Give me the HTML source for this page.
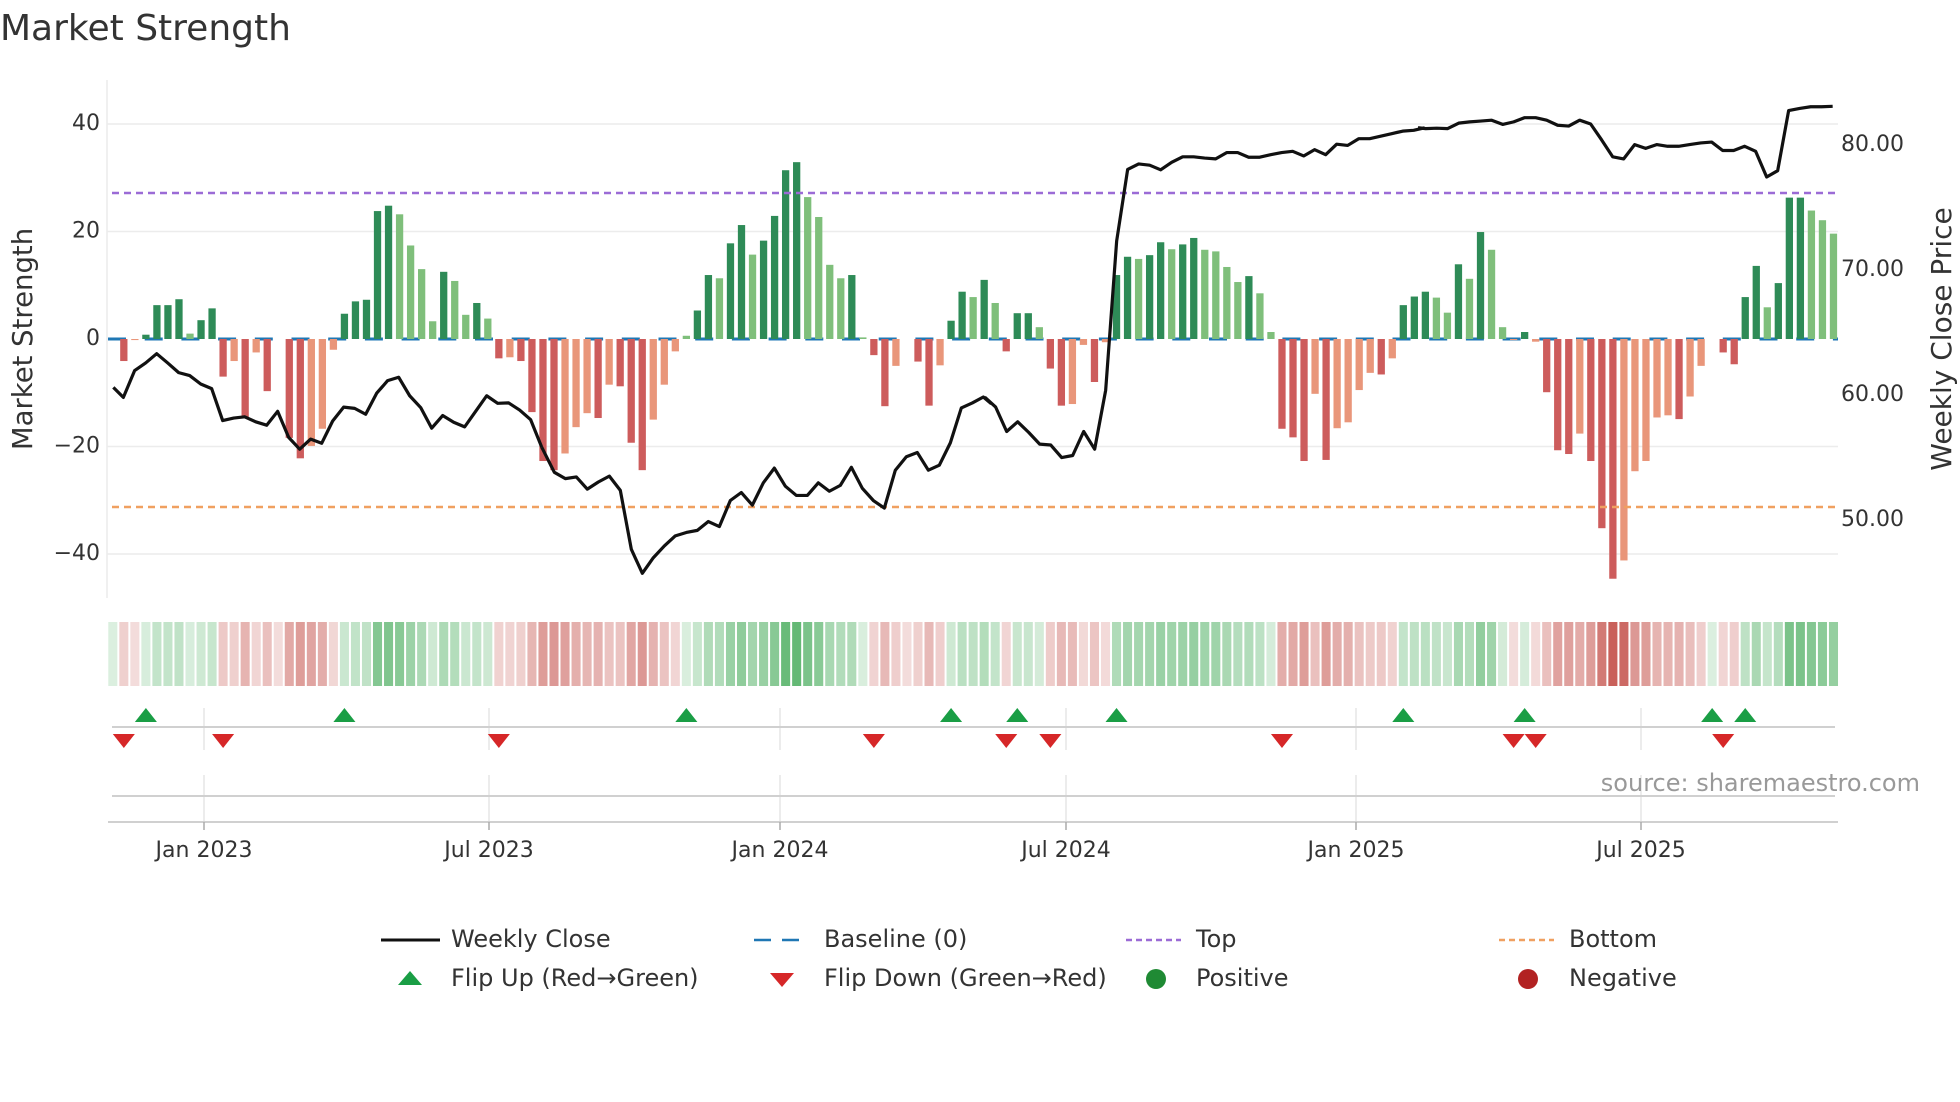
<!DOCTYPE html>
<html><head><meta charset="utf-8"><style>
html,body{margin:0;padding:0;background:#fff;}
svg{display:block;font-family:"DejaVu Sans","Liberation Sans",sans-serif;}
.dg{fill:#2e8b57}.lg{fill:#7fbf7b}.dr{fill:#cd5c5c}.lr{fill:#e9967a}
.hg{fill:#4aad5e}.hr{fill:#c4504a}
</style></head><body>
<svg width="1960" height="1102" viewBox="0 0 1960 1102" xmlns="http://www.w3.org/2000/svg">
<rect width="1960" height="1102" fill="#fff"/>
<text x="0" y="40" font-size="36" fill="#333">Market Strength</text>

<g stroke="#ececec" stroke-width="1.5">
<line x1="107" y1="124" x2="1838" y2="124"/><line x1="107" y1="231.5" x2="1838" y2="231.5"/>
<line x1="107" y1="446.5" x2="1838" y2="446.5"/><line x1="107" y1="554" x2="1838" y2="554"/>
<line x1="107" y1="80" x2="107" y2="598"/>
</g>
<line x1="108" y1="339" x2="1838" y2="339" stroke="#1f77b4" stroke-width="3" stroke-dasharray="18 18.7"/>

<g font-size="22" fill="#333" text-anchor="end" dominant-baseline="middle">
<text x="100" y="124">40</text><text x="100" y="231.5">20</text><text x="100" y="339">0</text>
<text x="100" y="446.5">−20</text><text x="100" y="554">−40</text>
</g>
<g font-size="22" fill="#333" dominant-baseline="middle">
<text x="1841" y="145">80.00</text><text x="1841" y="270">70.00</text><text x="1841" y="395">60.00</text><text x="1841" y="520">50.00</text>
</g>
<text transform="translate(24,339) rotate(-90)" font-size="27.5" fill="#333" text-anchor="middle" dominant-baseline="middle">Market Strength</text>
<text transform="translate(1943,339) rotate(-90)" font-size="28" fill="#333" text-anchor="middle" dominant-baseline="middle">Weekly Close Price</text>

<g transform="translate(112.8,339) scale(11.03,-5.375)">
<rect class="dr" x="0.67" y="-4.1" width="0.66" height="4.1"/>
<rect class="lr" x="1.67" y="-0.2" width="0.66" height="0.2"/>
<rect class="dg" x="2.67" y="0" width="0.66" height="0.8"/>
<rect class="dg" x="3.67" y="0" width="0.66" height="6.3"/>
<rect class="dg" x="4.67" y="0" width="0.66" height="6.3"/>
<rect class="dg" x="5.67" y="0" width="0.66" height="7.4"/>
<rect class="lg" x="6.67" y="0" width="0.66" height="1.0"/>
<rect class="dg" x="7.67" y="0" width="0.66" height="3.5"/>
<rect class="dg" x="8.67" y="0" width="0.66" height="5.7"/>
<rect class="dr" x="9.67" y="-7.0" width="0.66" height="7.0"/>
<rect class="lr" x="10.67" y="-4.1" width="0.66" height="4.1"/>
<rect class="dr" x="11.67" y="-14.6" width="0.66" height="14.6"/>
<rect class="lr" x="12.67" y="-2.5" width="0.66" height="2.5"/>
<rect class="dr" x="13.67" y="-9.7" width="0.66" height="9.7"/>
<rect class="dr" x="15.67" y="-18.4" width="0.66" height="18.4"/>
<rect class="dr" x="16.67" y="-22.2" width="0.66" height="22.2"/>
<rect class="lr" x="17.67" y="-19.9" width="0.66" height="19.9"/>
<rect class="lr" x="18.67" y="-16.7" width="0.66" height="16.7"/>
<rect class="lr" x="19.67" y="-2.0" width="0.66" height="2.0"/>
<rect class="dg" x="20.67" y="0" width="0.66" height="4.7"/>
<rect class="dg" x="21.67" y="0" width="0.66" height="7.0"/>
<rect class="dg" x="22.67" y="0" width="0.66" height="7.3"/>
<rect class="dg" x="23.67" y="0" width="0.66" height="23.8"/>
<rect class="dg" x="24.67" y="0" width="0.66" height="24.8"/>
<rect class="lg" x="25.67" y="0" width="0.66" height="23.2"/>
<rect class="lg" x="26.67" y="0" width="0.66" height="17.4"/>
<rect class="lg" x="27.67" y="0" width="0.66" height="13.0"/>
<rect class="lg" x="28.67" y="0" width="0.66" height="3.3"/>
<rect class="dg" x="29.67" y="0" width="0.66" height="12.5"/>
<rect class="lg" x="30.67" y="0" width="0.66" height="10.8"/>
<rect class="lg" x="31.67" y="0" width="0.66" height="4.5"/>
<rect class="dg" x="32.67" y="0" width="0.66" height="6.7"/>
<rect class="lg" x="33.67" y="0" width="0.66" height="3.8"/>
<rect class="dr" x="34.67" y="-3.6" width="0.66" height="3.6"/>
<rect class="lr" x="35.67" y="-3.4" width="0.66" height="3.4"/>
<rect class="dr" x="36.67" y="-4.1" width="0.66" height="4.1"/>
<rect class="dr" x="37.67" y="-13.6" width="0.66" height="13.6"/>
<rect class="dr" x="38.67" y="-22.7" width="0.66" height="22.7"/>
<rect class="dr" x="39.67" y="-24.4" width="0.66" height="24.4"/>
<rect class="lr" x="40.67" y="-21.3" width="0.66" height="21.3"/>
<rect class="lr" x="41.67" y="-16.4" width="0.66" height="16.4"/>
<rect class="lr" x="42.67" y="-13.8" width="0.66" height="13.8"/>
<rect class="dr" x="43.67" y="-14.7" width="0.66" height="14.7"/>
<rect class="lr" x="44.67" y="-8.5" width="0.66" height="8.5"/>
<rect class="dr" x="45.67" y="-8.8" width="0.66" height="8.8"/>
<rect class="dr" x="46.67" y="-19.3" width="0.66" height="19.3"/>
<rect class="dr" x="47.67" y="-24.4" width="0.66" height="24.4"/>
<rect class="lr" x="48.67" y="-15.0" width="0.66" height="15.0"/>
<rect class="lr" x="49.67" y="-8.5" width="0.66" height="8.5"/>
<rect class="lr" x="50.67" y="-2.3" width="0.66" height="2.3"/>
<rect class="lg" x="51.67" y="0" width="0.66" height="0.6"/>
<rect class="dg" x="52.67" y="0" width="0.66" height="5.3"/>
<rect class="dg" x="53.67" y="0" width="0.66" height="11.9"/>
<rect class="lg" x="54.67" y="0" width="0.66" height="11.3"/>
<rect class="dg" x="55.67" y="0" width="0.66" height="17.8"/>
<rect class="dg" x="56.67" y="0" width="0.66" height="21.2"/>
<rect class="lg" x="57.67" y="0" width="0.66" height="15.7"/>
<rect class="dg" x="58.67" y="0" width="0.66" height="18.3"/>
<rect class="dg" x="59.67" y="0" width="0.66" height="22.9"/>
<rect class="dg" x="60.67" y="0" width="0.66" height="31.4"/>
<rect class="dg" x="61.67" y="0" width="0.66" height="32.9"/>
<rect class="lg" x="62.67" y="0" width="0.66" height="26.4"/>
<rect class="lg" x="63.67" y="0" width="0.66" height="22.7"/>
<rect class="lg" x="64.67" y="0" width="0.66" height="13.8"/>
<rect class="lg" x="65.67" y="0" width="0.66" height="11.3"/>
<rect class="dg" x="66.67" y="0" width="0.66" height="11.9"/>
<rect class="lg" x="67.67" y="0" width="0.66" height="0.3"/>
<rect class="dr" x="68.67" y="-3.0" width="0.66" height="3.0"/>
<rect class="dr" x="69.67" y="-12.5" width="0.66" height="12.5"/>
<rect class="lr" x="70.67" y="-5.0" width="0.66" height="5.0"/>
<rect class="dr" x="72.67" y="-4.2" width="0.66" height="4.2"/>
<rect class="dr" x="73.67" y="-12.4" width="0.66" height="12.4"/>
<rect class="lr" x="74.67" y="-4.9" width="0.66" height="4.9"/>
<rect class="dg" x="75.67" y="0" width="0.66" height="3.4"/>
<rect class="dg" x="76.67" y="0" width="0.66" height="8.8"/>
<rect class="lg" x="77.67" y="0" width="0.66" height="7.8"/>
<rect class="dg" x="78.67" y="0" width="0.66" height="11.0"/>
<rect class="lg" x="79.67" y="0" width="0.66" height="6.7"/>
<rect class="dr" x="80.67" y="-2.3" width="0.66" height="2.3"/>
<rect class="dg" x="81.67" y="0" width="0.66" height="4.8"/>
<rect class="dg" x="82.67" y="0" width="0.66" height="4.8"/>
<rect class="lg" x="83.67" y="0" width="0.66" height="2.2"/>
<rect class="dr" x="84.67" y="-5.5" width="0.66" height="5.5"/>
<rect class="dr" x="85.67" y="-12.4" width="0.66" height="12.4"/>
<rect class="lr" x="86.67" y="-12.1" width="0.66" height="12.1"/>
<rect class="lr" x="87.67" y="-1.1" width="0.66" height="1.1"/>
<rect class="dr" x="88.67" y="-8.0" width="0.66" height="8.0"/>
<rect class="lr" x="89.67" y="-0.6" width="0.66" height="0.6"/>
<rect class="dg" x="90.67" y="0" width="0.66" height="11.9"/>
<rect class="dg" x="91.67" y="0" width="0.66" height="15.3"/>
<rect class="lg" x="92.67" y="0" width="0.66" height="14.9"/>
<rect class="dg" x="93.67" y="0" width="0.66" height="15.6"/>
<rect class="dg" x="94.67" y="0" width="0.66" height="18.0"/>
<rect class="lg" x="95.67" y="0" width="0.66" height="16.7"/>
<rect class="dg" x="96.67" y="0" width="0.66" height="17.6"/>
<rect class="dg" x="97.67" y="0" width="0.66" height="18.8"/>
<rect class="lg" x="98.67" y="0" width="0.66" height="16.6"/>
<rect class="lg" x="99.67" y="0" width="0.66" height="16.3"/>
<rect class="lg" x="100.67" y="0" width="0.66" height="13.4"/>
<rect class="lg" x="101.67" y="0" width="0.66" height="10.6"/>
<rect class="dg" x="102.67" y="0" width="0.66" height="11.7"/>
<rect class="lg" x="103.67" y="0" width="0.66" height="8.5"/>
<rect class="lg" x="104.67" y="0" width="0.66" height="1.3"/>
<rect class="dr" x="105.67" y="-16.7" width="0.66" height="16.7"/>
<rect class="dr" x="106.67" y="-18.3" width="0.66" height="18.3"/>
<rect class="dr" x="107.67" y="-22.7" width="0.66" height="22.7"/>
<rect class="lr" x="108.67" y="-10.2" width="0.66" height="10.2"/>
<rect class="dr" x="109.67" y="-22.5" width="0.66" height="22.5"/>
<rect class="lr" x="110.67" y="-16.6" width="0.66" height="16.6"/>
<rect class="lr" x="111.67" y="-15.5" width="0.66" height="15.5"/>
<rect class="lr" x="112.67" y="-9.5" width="0.66" height="9.5"/>
<rect class="lr" x="113.67" y="-6.3" width="0.66" height="6.3"/>
<rect class="dr" x="114.67" y="-6.6" width="0.66" height="6.6"/>
<rect class="lr" x="115.67" y="-3.6" width="0.66" height="3.6"/>
<rect class="dg" x="116.67" y="0" width="0.66" height="6.3"/>
<rect class="dg" x="117.67" y="0" width="0.66" height="7.9"/>
<rect class="dg" x="118.67" y="0" width="0.66" height="8.8"/>
<rect class="lg" x="119.67" y="0" width="0.66" height="7.7"/>
<rect class="lg" x="120.67" y="0" width="0.66" height="4.9"/>
<rect class="dg" x="121.67" y="0" width="0.66" height="13.9"/>
<rect class="lg" x="122.67" y="0" width="0.66" height="11.2"/>
<rect class="dg" x="123.67" y="0" width="0.66" height="19.9"/>
<rect class="lg" x="124.67" y="0" width="0.66" height="16.6"/>
<rect class="lg" x="125.67" y="0" width="0.66" height="2.2"/>
<rect class="lr" x="126.67" y="-0.2" width="0.66" height="0.2"/>
<rect class="dg" x="127.67" y="0" width="0.66" height="1.3"/>
<rect class="lr" x="128.67" y="-0.5" width="0.66" height="0.5"/>
<rect class="dr" x="129.67" y="-9.9" width="0.66" height="9.9"/>
<rect class="dr" x="130.67" y="-20.7" width="0.66" height="20.7"/>
<rect class="dr" x="131.67" y="-21.4" width="0.66" height="21.4"/>
<rect class="lr" x="132.67" y="-17.6" width="0.66" height="17.6"/>
<rect class="dr" x="133.67" y="-22.7" width="0.66" height="22.7"/>
<rect class="dr" x="134.67" y="-35.2" width="0.66" height="35.2"/>
<rect class="dr" x="135.67" y="-44.6" width="0.66" height="44.6"/>
<rect class="lr" x="136.67" y="-41.2" width="0.66" height="41.2"/>
<rect class="lr" x="137.67" y="-24.6" width="0.66" height="24.6"/>
<rect class="lr" x="138.67" y="-22.7" width="0.66" height="22.7"/>
<rect class="lr" x="139.67" y="-14.6" width="0.66" height="14.6"/>
<rect class="lr" x="140.67" y="-14.2" width="0.66" height="14.2"/>
<rect class="dr" x="141.67" y="-14.9" width="0.66" height="14.9"/>
<rect class="lr" x="142.67" y="-10.7" width="0.66" height="10.7"/>
<rect class="lr" x="143.67" y="-5.0" width="0.66" height="5.0"/>
<rect class="dr" x="145.67" y="-2.5" width="0.66" height="2.5"/>
<rect class="dr" x="146.67" y="-4.7" width="0.66" height="4.7"/>
<rect class="dg" x="147.67" y="0" width="0.66" height="7.8"/>
<rect class="dg" x="148.67" y="0" width="0.66" height="13.6"/>
<rect class="lg" x="149.67" y="0" width="0.66" height="5.9"/>
<rect class="dg" x="150.67" y="0" width="0.66" height="10.4"/>
<rect class="dg" x="151.67" y="0" width="0.66" height="26.3"/>
<rect class="dg" x="152.67" y="0" width="0.66" height="26.3"/>
<rect class="lg" x="153.67" y="0" width="0.66" height="23.9"/>
<rect class="lg" x="154.67" y="0" width="0.66" height="22.1"/>
<rect class="lg" x="155.67" y="0" width="0.66" height="19.6"/>
</g>

<line x1="112" y1="193" x2="1838" y2="193" stroke="#9b6bd6" stroke-width="2.5" stroke-dasharray="7 5"/>
<line x1="112" y1="507" x2="1838" y2="507" stroke="#f0a060" stroke-width="2.5" stroke-dasharray="7 5"/>

<g fill="none" stroke="#111" stroke-width="3.2" stroke-linejoin="round">
<polyline vector-effect="non-scaling-stroke" transform="translate(100,100) scale(0.33333,0.4207)" points="40,683 70,707 104,643 137,625 170,603 203,625 236,648 269,655 302,675 335,686 368,762 401,756 434,753 467,765 500,773 533,740 566,802 599,830 632,806 665,816 698,763 731,730 764,733 797,747 830,697 863,667 896,659 929,703 962,731 995,780 1028,750 1061,766 1094,777 1127,740 1160,703 1193,721 1226,720 1259,737 1292,760 1325,825"/>
<polyline vector-effect="non-scaling-stroke" transform="translate(540,100) scale(0.33333,0.4207)" points="5,825 43,885 76,900 109,896 142,925 175,908 208,894 241,928 274,1068 307,1125 340,1088 373,1060 406,1036 439,1028 472,1023 505,1002 538,1014 571,952 604,933 637,963 670,910 703,875 736,918 769,940 802,940 835,910 868,930 901,916 934,873 967,923 1000,952 1033,970 1066,880 1099,848 1132,838 1165,880 1198,868 1231,815 1264,732 1297,720 1330,706 1354,722"/>
<polyline vector-effect="non-scaling-stroke" transform="translate(980,100) scale(0.33333,0.4207)" points="14,706 47,730 80,788 113,765 146,790 179,818 212,820 245,850 278,845 311,788 344,830 377,690 410,335 443,165 476,152 509,155 542,166 575,148 608,135 641,135 674,138 707,140 740,125 773,125 806,136 839,136 872,130 905,125 938,122 971,133 1004,118 1037,130 1070,105 1103,108 1136,92 1169,92 1202,86 1235,80 1268,74 1301,72 1334,66"/>
<polyline vector-effect="non-scaling-stroke" transform="translate(1420,100) scale(0.33333,0.4207)" points="-6,66 17,68 50,67 83,68 116,55 149,52 182,50 215,48 248,58 281,52 314,42 347,42 380,48 413,60 446,62 479,48 512,57 545,95 578,135 611,140 644,106 677,115 710,106 743,110 776,110 809,106 842,102 875,100 908,120 941,120 974,110 1007,122 1040,183 1073,168 1106,25 1139,20 1172,16 1205,16 1238,15"/>
</g>

<g transform="translate(112.8,622) scale(11.03,1)">
<rect class="hg" x="-0.41" width="0.82" height="64" opacity=".20"/>
<rect class="hr" x="0.59" width="0.82" height="64" opacity=".27"/>
<rect class="hr" x="1.59" width="0.82" height="64" opacity=".20"/>
<rect class="hg" x="2.59" width="0.82" height="64" opacity=".22"/>
<rect class="hg" x="3.59" width="0.82" height="64" opacity=".33"/>
<rect class="hg" x="4.59" width="0.82" height="64" opacity=".33"/>
<rect class="hg" x="5.59" width="0.82" height="64" opacity=".35"/>
<rect class="hg" x="6.59" width="0.82" height="64" opacity=".22"/>
<rect class="hg" x="7.59" width="0.82" height="64" opacity=".27"/>
<rect class="hg" x="8.59" width="0.82" height="64" opacity=".31"/>
<rect class="hr" x="9.59" width="0.82" height="64" opacity=".31"/>
<rect class="hr" x="10.59" width="0.82" height="64" opacity=".27"/>
<rect class="hr" x="11.59" width="0.82" height="64" opacity=".43"/>
<rect class="hr" x="12.59" width="0.82" height="64" opacity=".24"/>
<rect class="hr" x="13.59" width="0.82" height="64" opacity=".36"/>
<rect class="hr" x="14.59" width="0.82" height="64" opacity=".20"/>
<rect class="hr" x="15.59" width="0.82" height="64" opacity=".49"/>
<rect class="hr" x="16.59" width="0.82" height="64" opacity=".56"/>
<rect class="hr" x="17.59" width="0.82" height="64" opacity=".52"/>
<rect class="hr" x="18.59" width="0.82" height="64" opacity=".47"/>
<rect class="hr" x="19.59" width="0.82" height="64" opacity=".23"/>
<rect class="hg" x="20.59" width="0.82" height="64" opacity=".29"/>
<rect class="hg" x="21.59" width="0.82" height="64" opacity=".34"/>
<rect class="hg" x="22.59" width="0.82" height="64" opacity=".35"/>
<rect class="hg" x="23.59" width="0.82" height="64" opacity=".68"/>
<rect class="hg" x="24.59" width="0.82" height="64" opacity=".70"/>
<rect class="hg" x="25.59" width="0.82" height="64" opacity=".66"/>
<rect class="hg" x="26.59" width="0.82" height="64" opacity=".55"/>
<rect class="hg" x="27.59" width="0.82" height="64" opacity=".46"/>
<rect class="hg" x="28.59" width="0.82" height="64" opacity=".27"/>
<rect class="hg" x="29.59" width="0.82" height="64" opacity=".45"/>
<rect class="hg" x="30.59" width="0.82" height="64" opacity=".42"/>
<rect class="hg" x="31.59" width="0.82" height="64" opacity=".29"/>
<rect class="hg" x="32.59" width="0.82" height="64" opacity=".33"/>
<rect class="hg" x="33.59" width="0.82" height="64" opacity=".28"/>
<rect class="hr" x="34.59" width="0.82" height="64" opacity=".26"/>
<rect class="hr" x="35.59" width="0.82" height="64" opacity=".25"/>
<rect class="hr" x="36.59" width="0.82" height="64" opacity=".27"/>
<rect class="hr" x="37.59" width="0.82" height="64" opacity=".42"/>
<rect class="hr" x="38.59" width="0.82" height="64" opacity=".56"/>
<rect class="hr" x="39.59" width="0.82" height="64" opacity=".59"/>
<rect class="hr" x="40.59" width="0.82" height="64" opacity=".54"/>
<rect class="hr" x="41.59" width="0.82" height="64" opacity=".46"/>
<rect class="hr" x="42.59" width="0.82" height="64" opacity=".42"/>
<rect class="hr" x="43.59" width="0.82" height="64" opacity=".44"/>
<rect class="hr" x="44.59" width="0.82" height="64" opacity=".34"/>
<rect class="hr" x="45.59" width="0.82" height="64" opacity=".34"/>
<rect class="hr" x="46.59" width="0.82" height="64" opacity=".51"/>
<rect class="hr" x="47.59" width="0.82" height="64" opacity=".59"/>
<rect class="hr" x="48.59" width="0.82" height="64" opacity=".44"/>
<rect class="hr" x="49.59" width="0.82" height="64" opacity=".34"/>
<rect class="hr" x="50.59" width="0.82" height="64" opacity=".24"/>
<rect class="hg" x="51.59" width="0.82" height="64" opacity=".21"/>
<rect class="hg" x="52.59" width="0.82" height="64" opacity=".31"/>
<rect class="hg" x="53.59" width="0.82" height="64" opacity=".44"/>
<rect class="hg" x="54.59" width="0.82" height="64" opacity=".43"/>
<rect class="hg" x="55.59" width="0.82" height="64" opacity=".56"/>
<rect class="hg" x="56.59" width="0.82" height="64" opacity=".62"/>
<rect class="hg" x="57.59" width="0.82" height="64" opacity=".51"/>
<rect class="hg" x="58.59" width="0.82" height="64" opacity=".57"/>
<rect class="hg" x="59.59" width="0.82" height="64" opacity=".66"/>
<rect class="hg" x="60.59" width="0.82" height="64" opacity=".83"/>
<rect class="hg" x="61.59" width="0.82" height="64" opacity=".86"/>
<rect class="hg" x="62.59" width="0.82" height="64" opacity=".73"/>
<rect class="hg" x="63.59" width="0.82" height="64" opacity=".65"/>
<rect class="hg" x="64.59" width="0.82" height="64" opacity=".48"/>
<rect class="hg" x="65.59" width="0.82" height="64" opacity=".43"/>
<rect class="hg" x="66.59" width="0.82" height="64" opacity=".44"/>
<rect class="hg" x="67.59" width="0.82" height="64" opacity=".21"/>
<rect class="hr" x="68.59" width="0.82" height="64" opacity=".25"/>
<rect class="hr" x="69.59" width="0.82" height="64" opacity=".40"/>
<rect class="hr" x="70.59" width="0.82" height="64" opacity=".28"/>
<rect class="hr" x="71.59" width="0.82" height="64" opacity=".20"/>
<rect class="hr" x="72.59" width="0.82" height="64" opacity=".27"/>
<rect class="hr" x="73.59" width="0.82" height="64" opacity=".40"/>
<rect class="hr" x="74.59" width="0.82" height="64" opacity=".28"/>
<rect class="hg" x="75.59" width="0.82" height="64" opacity=".27"/>
<rect class="hg" x="76.59" width="0.82" height="64" opacity=".38"/>
<rect class="hg" x="77.59" width="0.82" height="64" opacity=".36"/>
<rect class="hg" x="78.59" width="0.82" height="64" opacity=".42"/>
<rect class="hg" x="79.59" width="0.82" height="64" opacity=".33"/>
<rect class="hr" x="80.59" width="0.82" height="64" opacity=".24"/>
<rect class="hg" x="81.59" width="0.82" height="64" opacity=".30"/>
<rect class="hg" x="82.59" width="0.82" height="64" opacity=".30"/>
<rect class="hg" x="83.59" width="0.82" height="64" opacity=".24"/>
<rect class="hr" x="84.59" width="0.82" height="64" opacity=".29"/>
<rect class="hr" x="85.59" width="0.82" height="64" opacity=".40"/>
<rect class="hr" x="86.59" width="0.82" height="64" opacity=".39"/>
<rect class="hr" x="87.59" width="0.82" height="64" opacity=".22"/>
<rect class="hr" x="88.59" width="0.82" height="64" opacity=".33"/>
<rect class="hr" x="89.59" width="0.82" height="64" opacity=".21"/>
<rect class="hg" x="90.59" width="0.82" height="64" opacity=".44"/>
<rect class="hg" x="91.59" width="0.82" height="64" opacity=".51"/>
<rect class="hg" x="92.59" width="0.82" height="64" opacity=".50"/>
<rect class="hg" x="93.59" width="0.82" height="64" opacity=".51"/>
<rect class="hg" x="94.59" width="0.82" height="64" opacity=".56"/>
<rect class="hg" x="95.59" width="0.82" height="64" opacity=".53"/>
<rect class="hg" x="96.59" width="0.82" height="64" opacity=".55"/>
<rect class="hg" x="97.59" width="0.82" height="64" opacity=".58"/>
<rect class="hg" x="98.59" width="0.82" height="64" opacity=".53"/>
<rect class="hg" x="99.59" width="0.82" height="64" opacity=".53"/>
<rect class="hg" x="100.59" width="0.82" height="64" opacity=".47"/>
<rect class="hg" x="101.59" width="0.82" height="64" opacity=".41"/>
<rect class="hg" x="102.59" width="0.82" height="64" opacity=".43"/>
<rect class="hg" x="103.59" width="0.82" height="64" opacity=".37"/>
<rect class="hg" x="104.59" width="0.82" height="64" opacity=".23"/>
<rect class="hr" x="105.59" width="0.82" height="64" opacity=".47"/>
<rect class="hr" x="106.59" width="0.82" height="64" opacity=".49"/>
<rect class="hr" x="107.59" width="0.82" height="64" opacity=".56"/>
<rect class="hr" x="108.59" width="0.82" height="64" opacity=".36"/>
<rect class="hr" x="109.59" width="0.82" height="64" opacity=".56"/>
<rect class="hr" x="110.59" width="0.82" height="64" opacity=".47"/>
<rect class="hr" x="111.59" width="0.82" height="64" opacity=".45"/>
<rect class="hr" x="112.59" width="0.82" height="64" opacity=".35"/>
<rect class="hr" x="113.59" width="0.82" height="64" opacity=".30"/>
<rect class="hr" x="114.59" width="0.82" height="64" opacity=".31"/>
<rect class="hr" x="115.59" width="0.82" height="64" opacity=".26"/>
<rect class="hg" x="116.59" width="0.82" height="64" opacity=".33"/>
<rect class="hg" x="117.59" width="0.82" height="64" opacity=".36"/>
<rect class="hg" x="118.59" width="0.82" height="64" opacity=".38"/>
<rect class="hg" x="119.59" width="0.82" height="64" opacity=".35"/>
<rect class="hg" x="120.59" width="0.82" height="64" opacity=".30"/>
<rect class="hg" x="121.59" width="0.82" height="64" opacity=".48"/>
<rect class="hg" x="122.59" width="0.82" height="64" opacity=".42"/>
<rect class="hg" x="123.59" width="0.82" height="64" opacity=".60"/>
<rect class="hg" x="124.59" width="0.82" height="64" opacity=".53"/>
<rect class="hg" x="125.59" width="0.82" height="64" opacity=".24"/>
<rect class="hr" x="126.59" width="0.82" height="64" opacity=".20"/>
<rect class="hg" x="127.59" width="0.82" height="64" opacity=".23"/>
<rect class="hr" x="128.59" width="0.82" height="64" opacity=".21"/>
<rect class="hr" x="129.59" width="0.82" height="64" opacity=".36"/>
<rect class="hr" x="130.59" width="0.82" height="64" opacity=".53"/>
<rect class="hr" x="131.59" width="0.82" height="64" opacity=".54"/>
<rect class="hr" x="132.59" width="0.82" height="64" opacity=".48"/>
<rect class="hr" x="133.59" width="0.82" height="64" opacity=".56"/>
<rect class="hr" x="134.59" width="0.82" height="64" opacity=".76"/>
<rect class="hr" x="135.59" width="0.82" height="64" opacity=".91"/>
<rect class="hr" x="136.59" width="0.82" height="64" opacity=".86"/>
<rect class="hr" x="137.59" width="0.82" height="64" opacity=".59"/>
<rect class="hr" x="138.59" width="0.82" height="64" opacity=".56"/>
<rect class="hr" x="139.59" width="0.82" height="64" opacity=".43"/>
<rect class="hr" x="140.59" width="0.82" height="64" opacity=".43"/>
<rect class="hr" x="141.59" width="0.82" height="64" opacity=".44"/>
<rect class="hr" x="142.59" width="0.82" height="64" opacity=".37"/>
<rect class="hr" x="143.59" width="0.82" height="64" opacity=".28"/>
<rect class="hg" x="144.59" width="0.82" height="64" opacity=".20"/>
<rect class="hr" x="145.59" width="0.82" height="64" opacity=".24"/>
<rect class="hr" x="146.59" width="0.82" height="64" opacity=".28"/>
<rect class="hg" x="147.59" width="0.82" height="64" opacity=".36"/>
<rect class="hg" x="148.59" width="0.82" height="64" opacity=".47"/>
<rect class="hg" x="149.59" width="0.82" height="64" opacity=".32"/>
<rect class="hg" x="150.59" width="0.82" height="64" opacity=".41"/>
<rect class="hg" x="151.59" width="0.82" height="64" opacity=".73"/>
<rect class="hg" x="152.59" width="0.82" height="64" opacity=".73"/>
<rect class="hg" x="153.59" width="0.82" height="64" opacity=".68"/>
<rect class="hg" x="154.59" width="0.82" height="64" opacity=".64"/>
<rect class="hg" x="155.59" width="0.82" height="64" opacity=".59"/>
</g>

<g stroke="#e6e6e6" stroke-width="1.5">
<line x1="204" y1="708" x2="204" y2="750"/><line x1="489" y1="708" x2="489" y2="750"/><line x1="780" y1="708" x2="780" y2="750"/>
<line x1="1066" y1="708" x2="1066" y2="750"/><line x1="1356" y1="708" x2="1356" y2="750"/><line x1="1641" y1="708" x2="1641" y2="750"/>
<line x1="204" y1="775" x2="204" y2="822"/><line x1="489" y1="775" x2="489" y2="822"/><line x1="780" y1="775" x2="780" y2="822"/>
<line x1="1066" y1="775" x2="1066" y2="822"/><line x1="1356" y1="775" x2="1356" y2="822"/><line x1="1641" y1="775" x2="1641" y2="822"/>
</g>
<g stroke="#d0d0d0" stroke-width="2">
<line x1="112" y1="727" x2="1835" y2="727"/>
<line x1="112" y1="796" x2="1835" y2="796"/>
<line x1="108" y1="822" x2="1838" y2="822"/>
</g>
<g stroke="#aaa" stroke-width="1.5">
<line x1="204" y1="822" x2="204" y2="830"/><line x1="489" y1="822" x2="489" y2="830"/><line x1="780" y1="822" x2="780" y2="830"/>
<line x1="1066" y1="822" x2="1066" y2="830"/><line x1="1356" y1="822" x2="1356" y2="830"/><line x1="1641" y1="822" x2="1641" y2="830"/>
</g>

<g transform="translate(112.8,0) scale(11.03,1)" fill="#1a9e45">
<polygon points="2.0,722 3,708 4.0,722"/><polygon points="20.0,722 21,708 22.0,722"/><polygon points="51.0,722 52,708 53.0,722"/>
<polygon points="75.0,722 76,708 77.0,722"/><polygon points="81.0,722 82,708 83.0,722"/><polygon points="90.0,722 91,708 92.0,722"/>
<polygon points="116.0,722 117,708 118.0,722"/><polygon points="127.0,722 128,708 129.0,722"/><polygon points="144.0,722 145,708 146.0,722"/>
<polygon points="147.0,722 148,708 149.0,722"/>
</g>
<g transform="translate(112.8,0) scale(11.03,1)" fill="#d62728">
<polygon points="0.0,734 1,748 2.0,734"/><polygon points="9.0,734 10,748 11.0,734"/><polygon points="34.0,734 35,748 36.0,734"/>
<polygon points="68.0,734 69,748 70.0,734"/><polygon points="80.0,734 81,748 82.0,734"/><polygon points="84.0,734 85,748 86.0,734"/>
<polygon points="105.0,734 106,748 107.0,734"/><polygon points="126.0,734 127,748 128.0,734"/><polygon points="128.0,734 129,748 130.0,734"/>
<polygon points="145.0,734 146,748 147.0,734"/>
</g>

<text x="1920" y="784" font-size="24" fill="#999" text-anchor="end" dominant-baseline="middle">source: sharemaestro.com</text>

<g font-size="22" fill="#333" text-anchor="middle" dominant-baseline="middle">
<text x="204" y="851">Jan 2023</text><text x="489" y="851">Jul 2023</text><text x="780" y="851">Jan 2024</text>
<text x="1066" y="851">Jul 2024</text><text x="1356" y="851">Jan 2025</text><text x="1641" y="851">Jul 2025</text>
</g>

<g font-size="24" fill="#333" dominant-baseline="middle">
<line x1="381" y1="940" x2="440" y2="940" stroke="#111" stroke-width="3"/>
<text x="451" y="940">Weekly Close</text>
<line x1="754" y1="940" x2="809" y2="940" stroke="#1f77b4" stroke-width="2.5" stroke-dasharray="17 11"/>
<text x="824" y="940">Baseline (0)</text>
<line x1="1126" y1="940" x2="1181" y2="940" stroke="#9b6bd6" stroke-width="2.5" stroke-dasharray="6 4"/>
<text x="1196" y="940">Top</text>
<line x1="1499" y1="940" x2="1554" y2="940" stroke="#f0a060" stroke-width="2.5" stroke-dasharray="6 4"/>
<text x="1569" y="940">Bottom</text>
<polygon points="398,985 410,971 422,985" fill="#1a9e45"/>
<text x="451" y="979">Flip Up (Red→Green)</text>
<polygon points="770,973 782,987 794,973" fill="#d62728"/>
<text x="824" y="979">Flip Down (Green→Red)</text>
<circle cx="1156" cy="979" r="10" fill="#1f8a34"/>
<text x="1196" y="979">Positive</text>
<circle cx="1528" cy="979" r="10" fill="#b22222"/>
<text x="1569" y="979">Negative</text>
</g>
</svg>
</body></html>
